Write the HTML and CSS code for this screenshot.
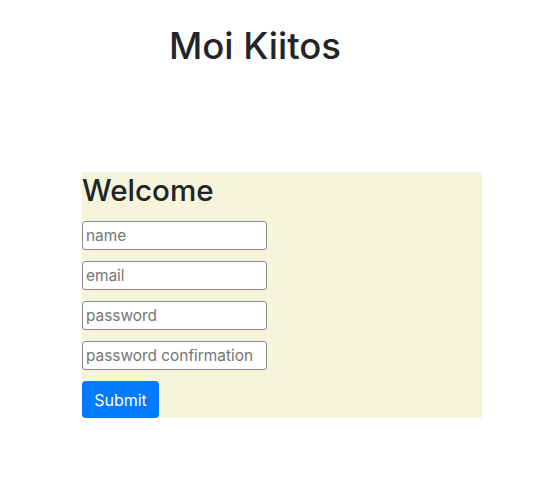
FILE: index.html
```html
<!DOCTYPE html>
<html>
<head>
<meta charset="utf-8">
<link rel="stylesheet" href="styles.css">
</head>
<body>
<header class="top">
  <h1 class="title">Moi Kiitos</h1>
</header>
<main class="panel">
  <h2 class="welcome">Welcome</h2>
  <form class="form">
    <input class="field" type="text" placeholder="name">
    <input class="field" type="text" placeholder="email">
    <input class="field" type="password" placeholder="password">
    <input class="field" type="password" placeholder="password confirmation">
    <button class="btn" type="button">Submit</button>
  </form>
</main>
</body>
</html>
```
FILE: styles.css
```css
html, body {
  margin: 0;
  padding: 0;
  background: #fff;
}
body {
  font-family: Inter, "Liberation Sans", Arial, sans-serif;
  color: #212529;
}
.top {
  padding: 25px 0 0 169px;
  height: 172px;
  box-sizing: border-box;
}
.title {
  margin: 0;
  font-size: 36.5px;
  font-weight: 500;
  line-height: 1.2;
}
.panel {
  margin-left: 82px;
  width: 400px;
  background: #f5f5dc;
}
.welcome {
  margin: 0 0 13px 0;
  font-size: 29.6px;
  font-weight: 500;
  line-height: 36px;
}
.form {
  display: flex;
  flex-direction: column;
  align-items: flex-start;
  gap: 11px;
}
.field {
  width: 185px;
  height: 29px;
  box-sizing: border-box;
  border: 1px solid #8a8a8a;
  border-radius: 3px;
  padding: 0 3px;
  font-family: Inter, "Liberation Sans", Arial, sans-serif;
  font-size: 15.4px;
  color: #212529;
  background: #fff;
}
.field::placeholder {
  color: #757575;
}
.btn {
  height: 37px;
  width: 77px;
  border: none;
  border-radius: 4px;
  background: #007bff;
  color: #fff;
  font-family: Inter, "Liberation Sans", Arial, sans-serif;
  font-size: 16px;
  padding: 0;
}
```
